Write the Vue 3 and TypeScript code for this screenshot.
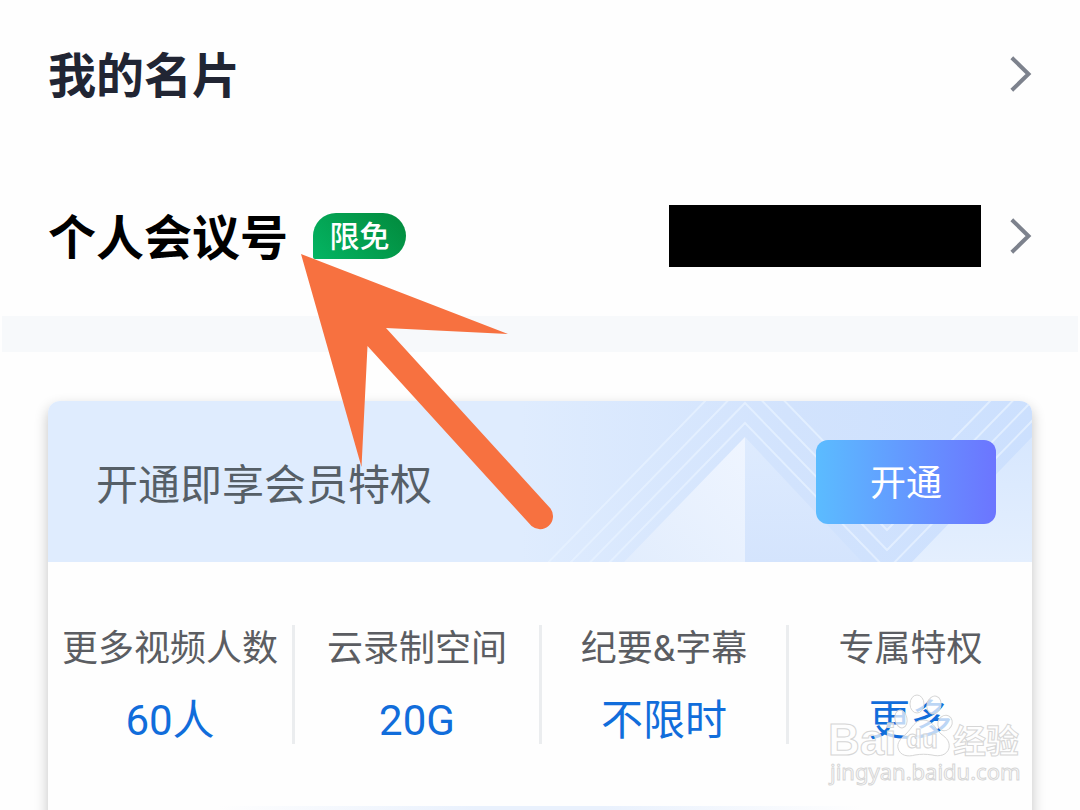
<script setup lang="ts">
interface Privilege {
  label: string
  value: string
}

const privileges: Privilege[] = [
  { label: '更多视频人数', value: '60人' },
  { label: '云录制空间', value: '20G' },
  { label: '纪要&字幕', value: '不限时' },
  { label: '专属特权', value: '更多' },
]

// Peak heights of the parallel zigzag lines in the banner
const peaks: number[] = [22, 2, -18, -41]
</script>

<template>
  <main class="page">
    <nav class="list">
      <a class="row" href="#card">
        <span class="row-title">我的名片</span>
        <svg class="chevron" viewBox="0 0 22 36" aria-hidden="true">
          <path d="M1.8 1.8 18.5 18 1.8 34.2" />
        </svg>
      </a>
      <a class="row" href="#meeting">
        <span class="row-title dark">个人会议号</span>
        <span class="badge">限免</span>
        <span class="masked"></span>
        <svg class="chevron" viewBox="0 0 22 36" aria-hidden="true">
          <path d="M1.8 1.8 18.5 18 1.8 34.2" />
        </svg>
      </a>
    </nav>

    <div class="divider"></div>

    <section class="card">
      <header class="banner">
        <svg class="banner-art" viewBox="0 0 484 161" aria-hidden="true">
          <defs>
            <linearGradient id="faceLeft" x1="0" y1="1" x2="1" y2="0">
              <stop offset="0" stop-color="#e2edfd" />
              <stop offset="1" stop-color="#eff5ff" />
            </linearGradient>
            <linearGradient id="faceRight" x1="0" y1="0" x2="0" y2="1">
              <stop offset="0" stop-color="#deebfe" />
              <stop offset="1" stop-color="#d4e4fd" />
            </linearGradient>
            <linearGradient id="faceEdge" x1="0" y1="0" x2="0" y2="1">
              <stop offset="0" stop-color="#d7e7fe" />
              <stop offset="1" stop-color="#e4effe" />
            </linearGradient>
          </defs>
          <path
            v-for="y in peaks"
            :key="y"
            class="ridge"
            :d="`M-13 ${y + 216} L197 ${y} L339 ${y + 147} L519 ${y - 38}`"
          />
          <path d="M197 36 197 161 76 161Z" fill="url(#faceLeft)" />
          <path d="M197 36 197 161 314 161Z" fill="url(#faceRight)" />
          <path d="M484 36 484 161 364 161Z" fill="url(#faceEdge)" />
        </svg>
        <h2 class="banner-title">开通即享会员特权</h2>
        <button class="open" type="button">开通</button>
      </header>
      <ul class="privileges">
        <li v-for="item in privileges" :key="item.label" class="privilege">
          <span class="label">{{ item.label }}</span>
          <span class="value">{{ item.value }}</span>
        </li>
      </ul>
      <div class="strip"></div>
    </section>

    <svg class="arrow" viewBox="0 0 260 280" aria-hidden="true">
      <path d="M1 4 208 84 86 78 250.500 258.500A13 13 0 0 1 231.500 276L67.500 96 61.500 217Z" />
    </svg>

    <svg class="watermark" viewBox="0 0 204 100" role="img" aria-label="Baidu 经验">
      <g class="mark">
        <ellipse cx="75" cy="28" rx="6" ry="9" transform="rotate(-12 75 28)" />
        <ellipse cx="91" cy="13" rx="7" ry="9" />
        <ellipse cx="108" cy="14" rx="7" ry="9" transform="rotate(15 108 14)" />
        <ellipse cx="119" cy="32" rx="7" ry="8" transform="rotate(30 119 32)" />
        <path d="M97 29c-8 0-11 8-17 14-6 5-9 9-8 14 2 8 10 9 17 7 6-1 11-1 17 0 8 2 15 0 17-7 1-6-2-10-8-14-6-6-9-14-18-14Z" />
        <text x="2" y="64" class="brand">Bai</text>
        <text x="80" y="57" class="paw-text">du</text>
        <text x="127" y="62" class="cjk">经验</text>
        <text x="4" y="89" class="url">jingyan.baidu.com</text>
      </g>
    </svg>
  </main>
</template>

<style>
body {
  margin: 0;
  background: #fefefe;
  overflow: hidden;
}
</style>

<style scoped>
.page {
  position: relative;
  min-height: 100vh;
  overflow: hidden;
  background: #fefefe;
  font-family: Roboto, "Noto Sans CJK SC", sans-serif;
}

.list {
  display: flex;
  flex-direction: column;
  gap: 66px;
  padding: 26px 48px 32px;
}

.row {
  display: flex;
  align-items: center;
  height: 96px;
  color: #212533;
  text-decoration: none;
}

.row-title {
  padding-top: 5px;
  font-size: 48px;
  line-height: 72px;
  font-weight: 700;
}

.dark {
  color: #000;
}

.badge {
  margin-left: 25px;
  padding-top: 2px;
  width: 93px;
  border-radius: 23px 23px 23px 2px;
  background: linear-gradient(45deg, #04b563, #02893c);
  color: #fff;
  font-size: 30px;
  font-weight: 500;
  line-height: 44px;
  text-align: center;
}

.masked {
  width: 312px;
  height: 62px;
  margin-left: auto;
  background: #000;
}

.chevron {
  width: 22px;
  height: 36px;
  margin-left: auto;
  fill: none;
  stroke: #7d828d;
  stroke-width: 4;
}

.masked + .chevron {
  margin-left: 29px;
}

.divider {
  height: 36px;
  margin: 0 2px;
  background: #f7f9fb;
}

.card {
  margin: 49px 48px 0;
  border-radius: 12px 12px 0 0;
  background: #fefefe;
  box-shadow: 0 6px 14px rgba(0, 0, 0, 0.24);
}

.banner {
  position: relative;
  display: flex;
  align-items: center;
  justify-content: space-between;
  height: 161px;
  padding: 0 36px 0 48px;
  border-radius: 12px 12px 0 0;
  overflow: hidden;
  background: linear-gradient(90deg, #dfecfe 0%, #dfecfe 48%, #d2e3fd 75%, #cce0fe 100%);
}

.banner-art {
  position: absolute;
  right: 0;
  top: 0;
  width: 484px;
  height: 161px;
}

.ridge {
  fill: none;
  stroke: #e6f1ff;
  stroke-width: 2;
  stroke-opacity: 0.8;
}

.banner-title {
  position: relative;
  margin: 0;
  padding-top: 8px;
  color: #565f67;
  font-size: 42px;
  font-weight: 400;
  line-height: 60px;
}

.open {
  position: relative;
  width: 180px;
  height: 84px;
  padding: 0 0 3px;
  border: 0;
  border-radius: 12px;
  background: linear-gradient(90deg, #5bbcff, #6c75ff);
  color: #fff;
  font-family: inherit;
  font-size: 36px;
  cursor: pointer;
}

.privileges {
  display: grid;
  grid-template-columns: 247fr 247fr 247fr 243fr;
  margin: 0;
  padding: 63px 0 62px;
  list-style: none;
}

.privilege {
  display: flex;
  flex-direction: column;
  align-items: center;
  gap: 18px;
  height: 119px;
  border-right: 3px solid #ebedef;
  white-space: nowrap;
}

.privilege:last-child {
  border-right: 0;
}

.label {
  color: #5b5d62;
  font-size: 36px;
  line-height: 48px;
}

.value {
  color: #116ddb;
  font-size: 42px;
  line-height: 60px;
}

.strip {
  height: 24px;
  margin: 0 170px;
  background: linear-gradient(90deg, #fefefe, #e9f1fd 40%, #e9f1fd 60%, #fefefe);
}

.arrow {
  position: absolute;
  left: 300px;
  top: 250px;
  width: 260px;
  height: 280px;
  fill: #f77140;
  pointer-events: none;
}

.watermark {
  position: absolute;
  right: 50px;
  top: 691px;
  width: 204px;
  height: 100px;
  pointer-events: none;
}

.mark {
  fill: rgba(255, 255, 255, 0.72);
  stroke: #d6d6d6;
  stroke-width: 1;
}

.mark text {
  font-family: "Liberation Sans", "Noto Sans CJK SC", sans-serif;
  font-weight: 700;
}

.mark .brand {
  font-size: 44px;
}

.mark .paw-text {
  font-size: 26px;
}

.mark .cjk {
  font-size: 33px;
}

.mark .url {
  font-family: "Noto Sans", sans-serif;
  font-size: 22px;
  font-weight: 400;
}
</style>
